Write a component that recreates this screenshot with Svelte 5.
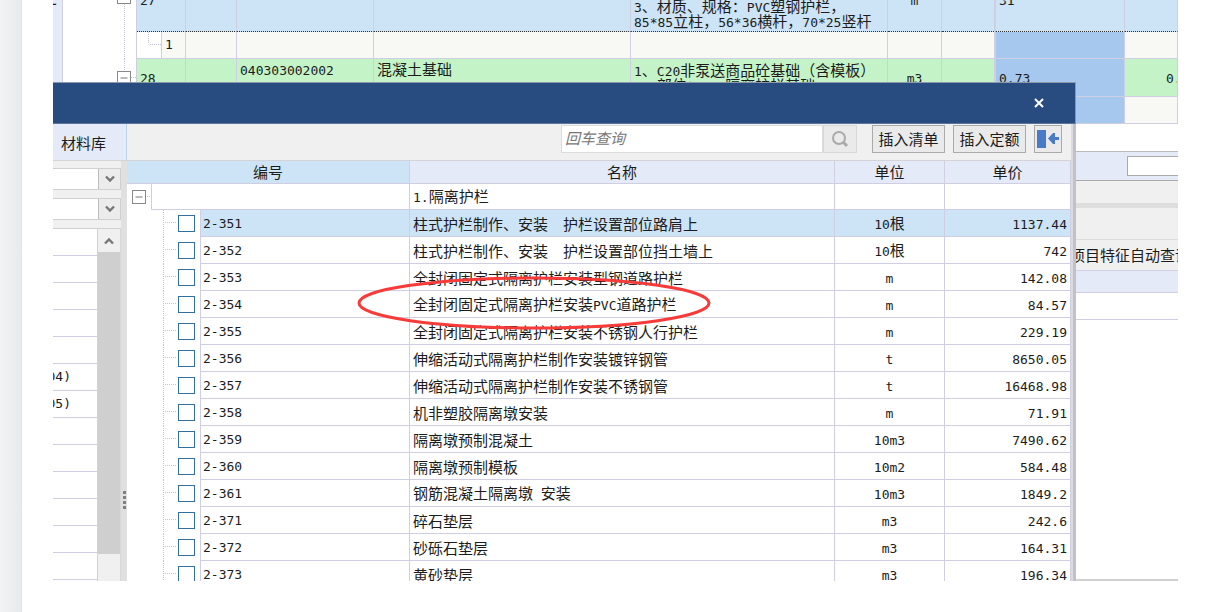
<script lang="ts">
  type Quota = { code: string; name: string; unit: string; price: string };

  const bills = [
    { no: '27', kind: 'selected', code: '', name: '', desc: ['3、材质、规格：PVC塑钢护栏，', '85*85立柱，56*36横杆，70*25竖杆'], unit: 'm', qty: '31', total: '' },
    { no: '1', kind: 'child', code: '', name: '', desc: [], unit: '', qty: '', total: '' },
    { no: '28', kind: 'bill', code: '040303002002', name: '混凝土基础', desc: ['1、C20非泵送商品砼基础（含模板）', '2、部位：PVC隔离护栏基础'], unit: 'm3', qty: '0.73', total: '0.73' },
    { no: '', kind: 'child', code: '', name: '', desc: [], unit: '', qty: '', total: '' },
  ];

  const quotas: Quota[] = [
    { code: '2-351', name: '柱式护栏制作、安装　护栏设置部位路肩上', unit: '10根', price: '1137.44' },
    { code: '2-352', name: '柱式护栏制作、安装　护栏设置部位挡土墙上', unit: '10根', price: '742' },
    { code: '2-353', name: '全封闭固定式隔离护栏安装型钢道路护栏', unit: 'm', price: '142.08' },
    { code: '2-354', name: '全封闭固定式隔离护栏安装PVC道路护栏', unit: 'm', price: '84.57' },
    { code: '2-355', name: '全封闭固定式隔离护栏安装不锈钢人行护栏', unit: 'm', price: '229.19' },
    { code: '2-356', name: '伸缩活动式隔离护栏制作安装镀锌钢管', unit: 't', price: '8650.05' },
    { code: '2-357', name: '伸缩活动式隔离护栏制作安装不锈钢管', unit: 't', price: '16468.98' },
    { code: '2-358', name: '机非塑胶隔离墩安装', unit: 'm', price: '71.91' },
    { code: '2-359', name: '隔离墩预制混凝土', unit: '10m3', price: '7490.62' },
    { code: '2-360', name: '隔离墩预制模板', unit: '10m2', price: '584.48' },
    { code: '2-361', name: '钢筋混凝土隔离墩 安装', unit: '10m3', price: '1849.2' },
    { code: '2-371', name: '碎石垫层', unit: 'm3', price: '242.6' },
    { code: '2-372', name: '砂砾石垫层', unit: 'm3', price: '164.31' },
    { code: '2-373', name: '黄砂垫层', unit: 'm3', price: '196.34' },
  ];

  const chapters = ['', '', '', '', '', '04)', '05)', '', '', '', '', '', '', ''];

  let selected = $state('2-351');
  let keyword = $state('');

  // latin runs are set in the mono face, half as wide as a Chinese character
  const split = (text: string) => text.split(/([\x20-\x7e]+)/).filter(Boolean);
  const isLatin = (part: string) => /^[\x20-\x7e]/.test(part);
</script>

{#snippet mixed(text: string)}
  {#each split(text) as part}<span class:latin={isLatin(part)}>{part}</span>{/each}
{/snippet}

{#snippet chevron(up: boolean)}
  <svg width="12" height="10" viewBox="0 0 12 10" aria-hidden="true">
    <path d={up ? 'M2 7.5 6 3.5 10 7.5' : 'M2 2.5 6 6.5 10 2.5'} fill="none" stroke="#777" stroke-width="2.4" />
  </svg>
{/snippet}

<div class="page">
  <div class="gutter"></div>
  <main class="sheet">
    <div class="desktop">
      <div class="app">
        <div class="nav"><span>定</span></div>
        <div class="work">
          <table class="bills">
            <colgroup>
              <col class="w-tree" /><col class="w-no" /><col class="w-flag" /><col class="w-code" /><col class="w-name" />
              <col class="w-desc" /><col class="w-unit" /><col class="w-rate" /><col class="w-qty" /><col />
            </colgroup>
            <tbody>
              {#each bills as bill}
                <tr class={bill.kind}>
                  <td class="tree">
                    {#if bill.kind === 'selected'}
                      <svg width="74" height="64" viewBox="0 0 74 64" aria-hidden="true">
                        <path d="M61.5 36V64" class="dots" />
                        <rect x="54.5" y="22.5" width="13" height="13" class="box" />
                      </svg>
                    {:else if bill.kind === 'bill'}
                      <svg width="74" height="38" viewBox="0 0 74 38" aria-hidden="true">
                        <path d="M61.5 0V12M68 18.5H74" class="dots" />
                        <rect x="54.5" y="12.5" width="13" height="13" class="box" />
                        <path d="M57.5 19H64.5" class="minus" />
                      </svg>
                    {:else}
                      <svg width="74" height="27" viewBox="0 0 74 27" aria-hidden="true">
                        <path d="M61.5 0V27" class="dots" />
                      </svg>
                    {/if}
                  </td>
                  <td class="no">
                    {#if bill.kind === 'child'}
                      <div class="nested">
                        <svg width="24" height="27" viewBox="0 0 24 27" aria-hidden="true">
                          <path d="M11.5 0V12.5H24" class="dots" />
                        </svg>
                        <span class="latin">{bill.no}</span>
                      </div>
                    {:else}
                      <span class="latin">{bill.no}</span>
                    {/if}
                  </td>
                  <td></td>
                  <td class="top">{@render mixed(bill.code)}</td>
                  <td class="top">{@render mixed(bill.name)}</td>
                  <td class="desc">
                    {#each bill.desc as line}
                      <div>{@render mixed(line)}</div>
                    {/each}
                  </td>
                  <td class="center">{@render mixed(bill.unit)}</td>
                  <td class="rate"></td>
                  <td class="qty">{@render mixed(bill.qty)}</td>
                  <td class="total">{@render mixed(bill.total)}</td>
                </tr>
              {/each}
            </tbody>
          </table>
          <div class="filter"><input type="text" aria-label="筛选" /></div>
          <div class="tabs"></div>
          <div class="tools"></div>
          <div class="caption"><span>项目特征自动查询</span></div>
          <div class="band"></div>
          <div class="blank"></div>
          <div class="floor"></div>
        </div>
      </div>

      <section class="dialog">
        <header class="titlebar">
          <button class="close" aria-label="关闭">
            <svg width="12" height="12" viewBox="0 0 12 12" aria-hidden="true">
              <path d="M2 2 10 10M10 2 2 10" stroke="#fff" stroke-width="2" />
            </svg>
          </button>
        </header>

        <div class="panes">
          <aside class="library">
            <button class="tab">材料库</button>
            <div class="side">
              <div class="side-main">
                <div class="pick">
                  <select aria-label="定额库"><option></option></select>
                  <span class="arrow">{@render chevron(false)}</span>
                </div>
                <div class="pick">
                  <select aria-label="专业"><option></option></select>
                  <span class="arrow">{@render chevron(false)}</span>
                </div>
                <div class="chapter-box">
                  <ul class="chapters">
                    {#each chapters as chapter}
                      <li><span class="latin">{chapter}</span></li>
                    {/each}
                  </ul>
                  <div class="scroll">
                    <button class="scroll-up" aria-label="向上">{@render chevron(true)}</button>
                    <div class="thumb"></div>
                    <div class="track"></div>
                  </div>
                </div>
              </div>
              <div class="splitter"><i></i><i></i><i></i><i></i></div>
            </div>
          </aside>

          <div class="quota-pane">
            <div class="toolbar">
              <div class="search">
                <input type="text" placeholder="回车查询" aria-label="回车查询" bind:value={keyword} />
                <button class="find" aria-label="查询">
                  <svg width="18" height="18" viewBox="0 0 18 18" aria-hidden="true">
                    <circle cx="8" cy="8" r="6" fill="none" stroke="#aaa" stroke-width="2" />
                    <path d="M12 12 16 16" stroke="#aaa" stroke-width="3" />
                  </svg>
                </button>
              </div>
              <div class="actions">
                <button class="insert">插入清单</button>
                <button class="insert">插入定额</button>
                <button class="dock" aria-label="停靠">
                  <svg width="22" height="18" viewBox="0 0 22 18" aria-hidden="true">
                    <path d="M0 0H9V18H0Z" fill="#4a7bc8" />
                    <path d="M11 8.5 16 3H18V7H22V10H18V14H16Z" fill="#4a7bc8" />
                  </svg>
                </button>
              </div>
            </div>

            <table class="quotas">
              <colgroup><col class="q-code" /><col /><col class="q-unit" /><col class="q-price" /></colgroup>
              <thead>
                <tr><th class="sorted">编号</th><th>名称</th><th>单位</th><th>单价</th></tr>
              </thead>
              <tbody>
                <tr class="group">
                  <td class="key">
                    <div class="node">
                      <svg width="24" height="26" viewBox="0 0 24 26" aria-hidden="true">
                        <rect x="5.5" y="6.5" width="13" height="13" class="box" />
                        <path d="M8.5 13H15.5" class="minus" />
                        <path d="M20 12.5H24" class="dots" />
                      </svg>
                      <span class="label"></span>
                    </div>
                  </td>
                  <td>{@render mixed('1.隔离护栏')}</td>
                  <td></td>
                  <td></td>
                </tr>
                {#each quotas as quota}
                  <tr class:active={quota.code === selected} onclick={() => (selected = quota.code)}>
                    <td class="key">
                      <div class="node">
                        <svg width="51" height="27" viewBox="0 0 51 27" aria-hidden="true">
                          <path d="M36.5 0V27M38 12.5H49" class="dots" />
                        </svg>
                        <input type="checkbox" id={quota.code} />
                        <label class="label latin" for={quota.code}>{quota.code}</label>
                      </div>
                    </td>
                    <td>{@render mixed(quota.name)}</td>
                    <td class="center">{@render mixed(quota.unit)}</td>
                    <td class="price">{@render mixed(quota.price)}</td>
                  </tr>
                {/each}
              </tbody>
            </table>
          </div>
        </div>

        <svg class="mark" width="356" height="56" viewBox="0 0 356 56" aria-hidden="true">
          <ellipse cx="178" cy="28" rx="175" ry="25" fill="none" stroke="#f73b38" stroke-width="3" />
        </svg>
      </section>
    </div>
  </main>
</div>

<style>
  :global(body) {
    margin: 0;
  }

  .page {
    --line: #cfcee2;
    --pale: #e4eaf7;
    --sky: #cce4f6;
    --grey: #f0f0f0;
    display: flex;
    height: 100vh;
    overflow: hidden;
    background: #fff;
    color: #1c1c1c;
    font: 15px/15px 'Noto Sans CJK SC', sans-serif;
  }

  .page :global(*) {
    box-sizing: border-box;
  }

  .gutter {
    flex: none;
    width: 22px;
    background: linear-gradient(90deg, #f2f3f5, #e8eaec);
    border-right: 1px solid #e2e4e6;
  }

  .sheet {
    flex: 1;
    min-width: 0;
    display: flex;
    padding: 0 30px 31px 31px;
  }

  .desktop {
    position: relative;
    flex: 1;
    min-width: 0;
    overflow: hidden;
  }

  button,
  input,
  select {
    margin: 0;
    padding: 0;
    border-radius: 0;
    font: inherit;
    color: inherit;
  }

  table {
    width: 100%;
    table-layout: fixed;
    border-collapse: separate;
    border-spacing: 0;
  }

  td,
  th {
    padding: 0 3px;
    border-right: 1px solid var(--line);
    border-bottom: 1px solid var(--line);
    font-weight: 400;
    text-align: left;
    white-space: pre;
    overflow: hidden;
  }

  .latin {
    font-family: 'DejaVu Sans Mono', monospace;
    font-size: 13px;
  }

  .dots {
    fill: none;
    stroke: #c4c3d8;
    stroke-dasharray: 1 1;
  }

  .box {
    fill: #fff;
    stroke: #888;
  }

  .minus {
    stroke: #777;
  }

  svg {
    display: block;
    flex: none;
  }

  td.center {
    text-align: center;
  }

  /* main window, scrolled by half a row */
  .app {
    display: flex;
    height: 100%;
  }

  .nav {
    display: flex;
    justify-content: flex-end;
    width: 10px;
    height: 100%;
    padding-right: 5px;
    line-height: 1px;
    overflow: hidden;
    background: var(--pale);
    border-right: 1px solid var(--line);
  }

  .nav span {
    margin-top: -4px;
  }

  .work {
    flex: 1;
    min-width: 0;
    display: flex;
    flex-direction: column;
    margin-top: -32px;
  }

  .w-tree { width: 74px; }
  .w-no { width: 49px; }
  .w-flag { width: 51px; }
  .w-code { width: 137px; }
  .w-name { width: 257px; }
  .w-desc { width: 257px; }
  .w-unit { width: 54px; }
  .w-rate { width: 54px; }
  .w-qty { width: 129px; }

  .bills tr { height: 27px; }
  .bills tr.selected { height: 64px; }
  .bills tr.bill { height: 38px; }

  .bills .child td { background: #f8f8f4; }
  .bills .bill td { background: #c4f3c8; }
  .bills .selected td {
    background: var(--sky);
    border-bottom: 1px dotted #333;
  }

  .bills .child td.qty,
  .bills .bill td.qty {
    background: #a6c8ef;
  }

  .bills tr td.tree {
    padding: 0;
    border-bottom: 0;
    background: #fff;
  }

  .bills .child td.no {
    padding: 0;
    background: #fff;
  }

  .nested {
    display: flex;
    height: 26px;
  }

  .nested span {
    flex: 1;
    padding-left: 3px;
    border-left: 1px solid var(--line);
    background: #f8f8f4;
    line-height: 26px;
  }

  td.top {
    vertical-align: top;
    padding-top: 2px;
  }

  td.desc {
    padding-top: 3px;
    padding-bottom: 3px;
    vertical-align: top;
  }

  td.desc div {
    height: 15px;
  }

  .selected td.desc {
    vertical-align: bottom;
  }

  td.rate {
    border-right-width: 2px;
  }

  td.total {
    padding-left: 41px;
  }

  .filter {
    display: flex;
    justify-content: flex-end;
    height: 30px;
    margin-top: 27px;
    padding: 4px 0;
    background: var(--pale);
    border-top: 1px solid #bbb;
    border-bottom: 1px solid #aaa;
  }

  .filter input {
    width: 51px;
    border: 1px solid #aaa;
    border-right: 0;
    background: #fff;
  }

  .tabs {
    height: 27px;
    background: var(--grey);
    border-bottom: 5px solid #dedede;
  }

  .tools {
    height: 32px;
    background: var(--grey);
    border-bottom: 1px solid #ddd;
  }

  .caption {
    display: flex;
    justify-content: flex-end;
    height: 31px;
    background: var(--grey);
    border-bottom: 1px solid var(--line);
    line-height: 30px;
  }

  .caption span {
    width: 108px;
    overflow: hidden;
    white-space: nowrap;
  }

  .band {
    height: 22px;
    background: var(--pale);
    border-bottom: 1px solid var(--line);
  }

  .blank {
    height: 27px;
    border-bottom: 1px solid var(--line);
  }

  .floor {
    flex: 1;
    border-bottom: 2px solid #d0d0d0;
  }

  /* quota lookup window, floating over the main one */
  .dialog {
    position: absolute;
    top: 82px;
    right: 102px;
    bottom: 0;
    left: 0;
    display: flex;
    flex-direction: column;
    overflow: hidden;
    background: #fff;
    border-top: 1px solid #8d99ab;
  }

  .titlebar {
    flex: none;
    display: flex;
    justify-content: flex-end;
    height: 41px;
    padding-right: 21px;
    background: #284c80;
    border-right: 1px solid #8d99ab;
    border-bottom: 1px solid #5b7499;
  }

  .close {
    display: grid;
    place-items: center;
    width: 30px;
    border: 0;
    background: none;
  }

  .panes {
    flex: 1;
    min-height: 0;
    display: flex;
    border-right: 3px solid #c2c2c2;
  }

  .library {
    flex: none;
    display: flex;
    flex-direction: column;
    width: 74px;
  }

  .tab {
    flex: none;
    height: 37px;
    padding-left: 8px;
    border: 0;
    border-right: 1px solid #bcd3ea;
    border-bottom: 1px solid #d5d5d5;
    background: var(--pale);
    text-align: left;
  }

  .side {
    flex: 1;
    min-height: 0;
    display: flex;
  }

  .side-main {
    flex: 1;
    min-width: 0;
    display: flex;
    flex-direction: column;
    gap: 8px;
    padding-top: 7px;
    background: var(--grey);
  }

  .pick {
    flex: none;
    display: grid;
    grid-template-columns: 1fr 22px;
    height: 22px;
    border: 1px solid #d0d0d0;
    border-left: 0;
    background: #fff;
  }

  .pick select {
    grid-area: 1 / 1 / 2 / 3;
    appearance: none;
    border: 0;
    background: none;
  }

  .pick .arrow {
    grid-area: 1 / 2;
    display: grid;
    place-items: center;
    border-left: 1px solid #bbb;
    background: #ececec;
    pointer-events: none;
  }

  .chapter-box {
    flex: 1;
    min-height: 0;
    display: flex;
    background: #fff;
    border-top: 1px solid #d0d0d0;
    overflow: hidden;
  }

  .chapters {
    flex: 1;
    margin: 0;
    padding: 0;
    list-style: none;
    border-right: 1px solid var(--line);
  }

  .chapters li {
    display: flex;
    width: 19px;
    min-width: 100%;
    height: 27px;
    padding-right: 26px;
    justify-content: flex-end;
    border-bottom: 1px solid var(--line);
    line-height: 26px;
    overflow: hidden;
  }

  .scroll {
    display: flex;
    flex-direction: column;
    width: 23px;
    border-right: 1px solid #d8d8d8;
  }

  .scroll-up {
    flex: none;
    display: grid;
    place-items: center;
    height: 23px;
    border: 0;
    background: var(--grey);
  }

  .thumb {
    flex: 1;
    background: #cfcfcf;
  }

  .track {
    height: 27px;
    background: var(--grey);
  }

  .splitter {
    display: flex;
    flex-direction: column;
    align-items: center;
    justify-content: flex-end;
    gap: 2px;
    width: 6px;
    padding-bottom: 72px;
    background: #e0e0e0;
  }

  .splitter i {
    width: 3px;
    height: 3px;
    background: #808080;
  }

  .quota-pane {
    flex: 1;
    min-width: 0;
    border-right: 2px solid #dadae2;
  }

  .toolbar {
    display: flex;
    justify-content: flex-end;
    gap: 15px;
    height: 37px;
    padding: 1px 9px 7px 0;
    background: var(--grey);
    border-bottom: 1px solid #d3d3d8;
  }

  .search {
    display: flex;
    width: 296px;
  }

  .search input {
    flex: 1;
    min-width: 0;
    padding: 0 0 4px 3px;
    border: 1px solid #dcdcdc;
    background: #fff;
    font-style: italic;
  }

  .search input::placeholder {
    color: #777;
  }

  .find,
  .insert,
  .dock {
    display: grid;
    place-items: center;
    background: #eaeaea;
  }

  .find {
    width: 34px;
    border: 1px solid #d8d8d8;
  }

  .actions {
    display: flex;
    gap: 8px;
  }

  .insert {
    width: 73px;
    padding-bottom: 2px;
    border: 1px solid #aaa;
  }

  .dock {
    width: 28px;
    border: 1px solid #aaa;
  }

  .q-code { width: 283px; }
  .q-unit { width: 110px; }
  .q-price { width: 126px; }

  .quotas th {
    height: 23px;
    padding-bottom: 2px;
    background: var(--pale);
    text-align: center;
  }

  .quotas th.sorted {
    background: var(--sky);
  }

  .quotas td {
    height: 27px;
  }

  .quotas .group td {
    height: 26px;
  }

  .quotas td.key {
    padding: 0;
    border-bottom: 0;
  }

  .node {
    display: flex;
    align-items: center;
    height: 27px;
  }

  .group .node {
    height: 26px;
  }

  .node .label {
    flex: 1;
    align-self: stretch;
    padding-left: 2px;
    border-left: 1px solid var(--line);
    border-bottom: 1px solid var(--line);
    line-height: 28px;
  }

  .node input {
    appearance: none;
    flex: none;
    width: 17px;
    height: 17px;
    margin-right: 5px;
    border: 1px solid #336f9f;
    background: #fff;
  }

  .node input:checked {
    background: #336f9f;
  }

  .active td,
  .active .label {
    background: var(--sky);
  }

  .active td.key {
    background: #fff;
  }

  td.price {
    text-align: right;
  }

  .mark {
    position: absolute;
    top: 192px;
    left: 303px;
    pointer-events: none;
  }
</style>
